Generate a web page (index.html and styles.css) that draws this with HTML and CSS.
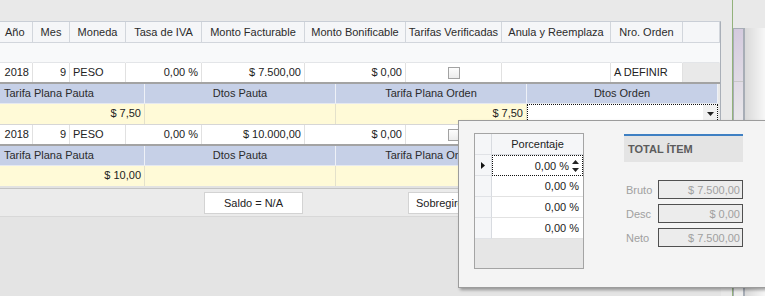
FILE: index.html
```html
<!DOCTYPE html>
<html lang="es">
<head>
  <meta charset="UTF-8">
  <title>Pautas</title>
  <link rel="stylesheet" href="styles.css">
</head>
<body>
  <div class="screen">
    <div class="main">
      <div class="top-band"></div>

      <!-- Master grid -->
      <div class="grid">
        <div class="row head">
          <div class="c first">Año</div>
          <div class="c">Mes</div>
          <div class="c">Moneda</div>
          <div class="c">Tasa de IVA</div>
          <div class="c">Monto Facturable</div>
          <div class="c">Monto Bonificable</div>
          <div class="c">Tarifas Verificadas</div>
          <div class="c">Anula y Reemplaza</div>
          <div class="c">Nro. Orden</div>
          <div class="c"></div>
        </div>
        <div class="row blank">
          <div class="c"></div><div class="c"></div><div class="c"></div><div class="c"></div><div class="c"></div>
          <div class="c"></div><div class="c"></div><div class="c"></div><div class="c"></div><div class="c"></div>
        </div>

        <div class="row data">
          <div class="c r">2018</div>
          <div class="c r">9</div>
          <div class="c l">PESO</div>
          <div class="c r">0,00 %</div>
          <div class="c r">$ 7.500,00</div>
          <div class="c r">$ 0,00</div>
          <div class="c mid"><span class="check"></span></div>
          <div class="c"></div>
          <div class="c l">A DEFINIR</div>
          <div class="c empty"></div>
        </div>
        <div class="detail">
          <div class="drow dhead">
            <div class="d first">Tarifa Plana Pauta</div>
            <div class="d">Dtos Pauta</div>
            <div class="d">Tarifa Plana Orden</div>
            <div class="d">Dtos Orden</div>
          </div>
          <div class="drow dvals">
            <div class="d r">$ 7,50</div>
            <div class="d"></div>
            <div class="d r">$ 7,50</div>
            <div class="d editor">
              <span class="drop">
                <svg width="7" height="4" viewBox="0 0 7 4"><polygon points="0,0 7,0 3.5,4" fill="#222"/></svg>
              </span>
            </div>
          </div>
        </div>

        <div class="row data">
          <div class="c r">2018</div>
          <div class="c r">9</div>
          <div class="c l">PESO</div>
          <div class="c r">0,00 %</div>
          <div class="c r">$ 10.000,00</div>
          <div class="c r">$ 0,00</div>
          <div class="c mid"><span class="check"></span></div>
          <div class="c"></div>
          <div class="c l">A DEFINIR</div>
          <div class="c empty"></div>
        </div>
        <div class="detail last">
          <div class="drow dhead">
            <div class="d first">Tarifa Plana Pauta</div>
            <div class="d">Dtos Pauta</div>
            <div class="d">Tarifa Plana Orden</div>
            <div class="d">Dtos Orden</div>
          </div>
          <div class="drow dvals">
            <div class="d r">$ 10,00</div>
            <div class="d"></div>
            <div class="d r">$ 10,00</div>
            <div class="d"></div>
          </div>
        </div>
      </div>

      <!-- Footer -->
      <div class="footer">
        <div class="box saldo">Saldo = N/A</div>
        <div class="box sobregiro">Sobregiro = N/A</div>
      </div>
      <div class="below"></div>
    </div>

    <div class="side">
      <div class="side-gap"></div>
      <div class="side-line"></div>
      <div class="side-panel"><div class="side-inner"></div></div>
      <div class="side-fade"></div>
    </div>

    <!-- Dropdown popup for Dtos Orden -->
    <div class="popup">
      <div class="pgrid">
        <div class="prow phead">
          <div class="ind"></div>
          <div class="pc center">Porcentaje</div>
        </div>
        <div class="prow">
          <div class="ind">
            <svg width="4" height="7" viewBox="0 0 4 7"><polygon points="0,0 4,3.5 0,7" fill="#111"/></svg>
          </div>
          <div class="pc focus">
            <span>0,00 %</span>
            <span class="spin">
              <svg width="7" height="12" viewBox="0 0 7 12"><polygon points="3.5,0 7,4 0,4" fill="#222"/><polygon points="0,8 7,8 3.5,12" fill="#222"/></svg>
            </span>
          </div>
        </div>
        <div class="prow"><div class="ind"></div><div class="pc">0,00 %</div></div>
        <div class="prow"><div class="ind"></div><div class="pc">0,00 %</div></div>
        <div class="prow"><div class="ind"></div><div class="pc">0,00 %</div></div>
        <div class="pfill"></div>
      </div>

      <div class="totals">
        <div class="total-title">TOTAL ÍTEM</div>
        <div class="fields">
          <div class="field"><span class="lbl">Bruto</span><span class="val">$ 7.500,00</span></div>
          <div class="field"><span class="lbl">Desc</span><span class="val">$ 0,00</span></div>
          <div class="field"><span class="lbl">Neto</span><span class="val">$ 7.500,00</span></div>
        </div>
      </div>
    </div>
  </div>
</body>
</html>
```

FILE: styles.css
```css
body {
  margin: 0;
  padding: 0;
  font-family: "Liberation Sans", Arial, sans-serif;
  font-size: 11px;
  color: #222;
  background: #e4e4e4;
}
.screen {
  position: relative;
  display: flex;
  width: 765px;
  height: 296px;
  overflow: hidden;
}
.main {
  width: 721px;
  display: flex;
  flex-direction: column;
}
.top-band {
  height: 21px;
  background: #e9e9e9;
}

/* master grid */
.grid {
  border-top: 1px solid #c9ced6;
  border-right: 1px solid #a9afb8;
  background: #e9e9e9;
}
.row {
  display: grid;
  grid-template-columns: 33px 37px 56px 76px 103px 101px 96px 109px 72px 37px;
  height: 20px;
  line-height: 19px;
  box-sizing: border-box;
}
.row .c {
  border-right: 1px solid #dcdfe4;
  border-bottom: 1px solid #dcdfe4;
  white-space: nowrap;
  overflow: hidden;
  padding: 0 3px;
}
.row.head {
  height: 21px;
  line-height: 20px;
  background: #f5f6f8;
  color: #2b2b2b;
}
.row.head .c {
  text-align: center;
  border-color: #d2d6dc;
  padding: 0 2px;
}
.row.head .c.first {
  text-align: left;
  padding-left: 5px;
}
.row.blank {
  background: #f8f9fa;
}
.row.blank .c {
  border-right-color: transparent;
  border-bottom-color: #e3e5e8;
}
.row.data {
  background: #fff;
  border-bottom: 2px solid #a3a3a3;
  height: 21px;
}
.row.data .c {
  border-bottom: none;
  border-color: #e1e1e1;
}
.row.data .c.empty {
  background: #e9e9e9;
  border-right: none;
}
.c.r { text-align: right; }
.c.l { text-align: left; padding-left: 3px; }
.c.mid {
  display: flex;
  align-items: center;
  justify-content: center;
}
.check {
  width: 10px;
  height: 10px;
  border: 1px solid #a2a2a2;
  background: linear-gradient(#fdfdfd, #ececec);
}

/* detail rows */
.detail {
  border-bottom: 1px solid #d6d6d6;
}
.detail.last {
  border-bottom: 1px solid #c4c4c4;
  padding-bottom: 2px;
  background: #e2e2e2;
}
.drow {
  display: grid;
  grid-template-columns: 145px 191px 191px 191px;
  height: 20px;
  line-height: 19px;
}
.drow .d {
  padding: 0 4px;
  white-space: nowrap;
  overflow: hidden;
}
.dhead .d {
  background: #c6d0e7;
  text-align: center;
  border-right: 1px solid #eef1f7;
  border-bottom: 1px solid #e6e9f0;
  color: #2b2b2b;
}
.dhead .d.first {
  text-align: left;
}
.dvals .d {
  background: #fffad7;
  border-right: 1px solid #e4e1cb;
}
.dvals .d.r {
  text-align: right;
  padding-right: 3px;
}
.dvals .d.editor {
  background: #fff;
  border: 1px dotted #111;
  padding: 0;
  display: flex;
  justify-content: flex-end;
}
.drop {
  width: 14px;
  display: flex;
  align-items: center;
  justify-content: center;
  background: #f1f1f1;
}

/* footer */
.footer {
  height: 27px;
  background: #ebebeb;
  border-bottom: 1px solid #d8d8d8;
  display: flex;
  align-items: center;
  padding-left: 204px;
  gap: 105px;
}
.box {
  height: 20px;
  line-height: 20px;
  background: #fff;
  border: 1px solid #d3d3d3;
  white-space: nowrap;
}
.saldo {
  width: 97px;
  text-align: center;
}
.sobregiro {
  width: 100px;
  padding-left: 7px;
}
.below {
  flex: 1;
  background: #e4e4e4;
}

/* right strip */
.side {
  flex: 1;
  display: flex;
  background: #e9e9e9;
}
.side-gap {
  width: 11px;
}
.side-line {
  width: 1px;
  background: #93b27b;
}
.side-panel {
  width: 9px;
  margin-top: 28px;
  border: 1px solid #a7adb6;
  border-bottom: none;
  background: linear-gradient(160deg, #d4cade, #ececec 40%);
  display: flex;
}
.side-inner {
  flex: 1;
  margin-top: 52px;
  border-top: 1px solid #c8c8c8;
}
.side-fade {
  flex: 1;
  border-left: 1px solid #a7adb6;
  margin-top: 28px;
  background: linear-gradient(to right, #d9d9d9, #f7f7f7);
}

/* popup */
.popup {
  position: absolute;
  left: 458px;
  top: 120px;
  width: 320px;
  height: 168px;
  box-sizing: border-box;
  background: #f4f4f4;
  border: 1px solid #9c9c9c;
  box-shadow: 2px 2px 3px rgba(0, 0, 0, 0.35);
  display: flex;
  padding: 12px 0 0 15px;
  gap: 40px;
}
.pgrid {
  width: 110px;
  height: 136px;
  box-sizing: border-box;
  border: 1px solid #a4a4a4;
  background: #e6e6e6;
  display: flex;
  flex-direction: column;
}
.prow {
  display: flex;
  height: 21px;
  line-height: 20px;
  background: #fff;
}
.prow .ind {
  width: 16px;
  background: #f5f6f8;
  border-right: 1px solid #d8dbe0;
  border-bottom: 1px solid #e0e2e6;
  display: flex;
  align-items: center;
  justify-content: center;
}
.prow .pc {
  flex: 1;
  text-align: right;
  padding-right: 4px;
  border-bottom: 1px solid #e2e2e2;
}
.phead {
  background: #f5f6f8;
}
.phead .pc {
  text-align: center;
  padding: 0;
  border-color: #d8dbe0;
}
.pc.focus {
  display: flex;
  justify-content: flex-end;
  align-items: center;
  border: 1px dotted #111;
  padding-right: 3px;
  gap: 3px;
}
.spin {
  display: flex;
}
.pfill {
  flex: 1;
}

.totals {
  width: 119px;
  padding-top: 1px;
}
.total-title {
  height: 26px;
  line-height: 26px;
  background: #e4e4e4;
  border-top: 2px solid #3f80c3;
  padding-left: 4px;
  font-weight: bold;
  color: #5c5c5c;
  white-space: nowrap;
}
.fields {
  margin-top: 18px;
  display: flex;
  flex-direction: column;
  gap: 5px;
}
.field {
  display: flex;
  justify-content: space-between;
  align-items: center;
}
.lbl {
  color: #a0a0a0;
  padding-left: 2px;
}
.val {
  width: 85px;
  height: 19px;
  line-height: 19px;
  box-sizing: border-box;
  border: 1px solid #505050;
  background: #ececec;
  color: #a0a0a0;
  text-align: right;
  padding-right: 2px;
}
```
